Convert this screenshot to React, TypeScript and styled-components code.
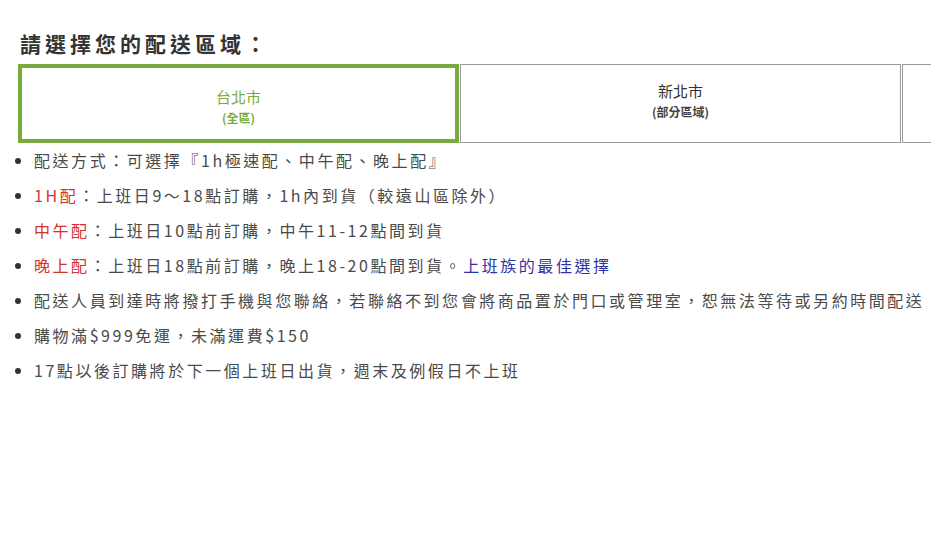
import styled, { createGlobalStyle, css } from "styled-components"

const AREAS = [
  { name: "台北市", note: "(全區)", active: true },
  { name: "新北市", note: "(部分區域)", active: false },
  { name: "桃園市", note: "(部分區域)", active: false },
]

const GlobalStyle = createGlobalStyle`
  html, body {
    margin: 0;
    padding: 0;
    background: #fff;
    overflow: hidden;
  }
  body {
    font-family: "Noto Sans CJK TC", "Noto Sans", "Liberation Sans", sans-serif;
    color: #444;
  }
`

export default function App() {
  return (
    <>
      <GlobalStyle />
      <Page>
        <Heading>請選擇您的配送區域：</Heading>
        <AreaRow>
          {AREAS.map((area) => (
            <AreaCard key={area.name} $active={area.active}>
              <AreaName $active={area.active}>{area.name}</AreaName>
              <AreaNote $active={area.active}>{area.note}</AreaNote>
            </AreaCard>
          ))}
        </AreaRow>
        <InfoList>
          <li>配送方式：可選擇『1h極速配、中午配、晚上配』</li>
          <li>
            <Red>1H配</Red>：上班日9～18點訂購，1h內到貨（較遠山區除外）
          </li>
          <li>
            <Red>中午配</Red>：上班日10點前訂購，中午11-12點間到貨
          </li>
          <li>
            <Red>晚上配</Red>：上班日18點前訂購，晚上18-20點間到貨。
            <Blue>上班族的最佳選擇</Blue>
          </li>
          <li>配送人員到達時將撥打手機與您聯絡，若聯絡不到您會將商品置於門口或管理室，恕無法等待或另約時間配送</li>
          <li>購物滿$999免運，未滿運費$150</li>
          <li>17點以後訂購將於下一個上班日出貨，週末及例假日不上班</li>
        </InfoList>
      </Page>
    </>
  )
}

const Page = styled.div`
  padding: 28px 0 0 18px;
`

const Heading = styled.h2`
  margin: 0 0 6px 2px;
  font-size: 21px;
  line-height: 30px;
  font-weight: 700;
  letter-spacing: 4px;
  color: #333;
  white-space: nowrap;
`

const AreaRow = styled.div`
  display: flex;
  gap: 1px;
  width: max-content;
`

const AreaCard = styled.div<{ $active: boolean }>`
  box-sizing: border-box;
  width: 441px;
  height: 79px;
  display: flex;
  flex-direction: column;
  align-items: center;
  ${({ $active }) =>
    $active
      ? css`
          border: 4px solid #7aa93c;
          padding-top: 18px;
        `
      : css`
          border: 1px solid #9a9a9a;
          padding-top: 15px;
        `}
`

const AreaName = styled.div<{ $active: boolean }>`
  font-size: 15px;
  line-height: 22px;
  color: ${({ $active }) => ($active ? "#7aa93c" : "#333")};
`

const AreaNote = styled.div<{ $active: boolean }>`
  font-size: 12px;
  line-height: 20px;
  font-weight: 700;
  color: ${({ $active }) => ($active ? "#7aa93c" : "#444")};
`

const InfoList = styled.ul`
  margin: 0;
  padding-left: 16px;
  list-style: disc;

  & > li {
    font-size: 16px;
    line-height: 35px;
    letter-spacing: 2.55px;
    color: #4a4a4a;
    white-space: nowrap;
  }

  & > li::marker {
    color: #333;
  }
`

const Red = styled.span`
  color: #d6322c;
`

const Blue = styled.span`
  color: #2f33a0;
`
